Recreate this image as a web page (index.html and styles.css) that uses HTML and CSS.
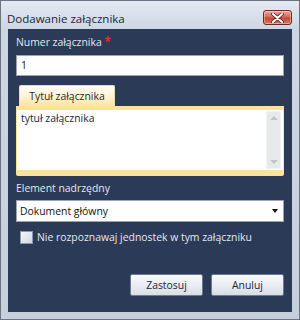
FILE: index.html
```html
<!DOCTYPE html>
<html lang="pl">
<head>
<meta charset="utf-8">
<link rel="stylesheet" href="styles.css">
</head>
<body>
<div class="window">
  <div class="titlebar">
    <span class="title">Dodawanie załącznika</span>
    <button class="close" aria-label="Zamknij">
      <svg width="13" height="10" viewBox="0 0 13 10"><path d="M2 1 L11 9 M11 1 L2 9" stroke="#5a2020" stroke-width="3.6" stroke-linecap="round"/><path d="M2 1 L11 9 M11 1 L2 9" stroke="#ffffff" stroke-width="2" stroke-linecap="round"/></svg>
    </button>
  </div>
  <div class="panel">
    <div class="label first">Numer załącznika <span class="req">*</span></div>
    <div class="input">1</div>
    <div class="group">
      <div class="tab">Tytuł załącznika</div>
      <div class="group-body">
        <div class="textarea">tytuł załącznika</div>
        <div class="scrollbar">
          <span class="arrow up"></span>
          <span class="arrow down"></span>
        </div>
      </div>
    </div>
    <div class="label second">Element nadrzędny</div>
    <div class="select">
      <span>Dokument główny</span>
      <span class="caret"></span>
    </div>
    <label class="check">
      <span class="box"></span>
      <span>Nie rozpoznawaj jednostek w tym załączniku</span>
    </label>
    <div class="buttons">
      <button class="btn">Zastosuj</button>
      <button class="btn">Anuluj</button>
    </div>
  </div>
</div>
</body>
</html>
```
FILE: styles.css
```css
* { box-sizing: border-box; }
html, body { margin: 0; padding: 0; }
body {
  width: 300px;
  height: 320px;
  font-family: "Open Sans", "Noto Sans", sans-serif;
  font-size: 10.4px;
}
.window {
  width: 300px;
  height: 320px;
  border: 1px solid #6a7484;
  background: linear-gradient(to bottom, #e4eaf2 0px, #cdd6e3 28px, #c6cfdc 100%);
  display: flex;
  flex-direction: column;
}
.titlebar {
  height: 28px;
  display: flex;
  align-items: flex-start;
  justify-content: space-between;
  padding: 0 7px 0 6px;
}
.title {
  color: #1b2636;
  font-size: 11.5px;
  line-height: 16px;
  margin-top: 10px;
}
.close {
  margin-top: 9px;
  width: 29px;
  height: 15px;
  padding: 0;
  border: 1px solid #6b2a24;
  border-radius: 3px;
  background: linear-gradient(to bottom, #e9a89a 0%, #d26b5a 45%, #c24a38 55%, #d5765f 100%);
  box-shadow: inset 0 0 0 1px rgba(255,255,255,0.35);
  display: flex;
  align-items: center;
  justify-content: center;
}
.panel {
  flex: 1;
  margin: 0 7px 7px 7px;
  background: #2b3a56;
  padding: 5px 8px 0 8px;
  display: flex;
  flex-direction: column;
}
.label {
  color: #e3e8f0;
  line-height: 16px;
}
.req { color: #e0302a; font-weight: bold; font-size: 11.5px; }
.input {
  margin-top: 5px;
  height: 21px;
  background: #fff;
  border: 1px solid #9aa4b4;
  padding: 0 4px;
  line-height: 19px;
  color: #111;
}
.group { margin-top: 9px; }
.tab {
  margin-left: 3px;
  width: 96px;
  height: 21px;
  border: 1px solid #e8dcb4;
  border-bottom: none;
  border-radius: 2px 2px 0 0;
  background: linear-gradient(to bottom, #fffdf6 0%, #fff3d2 50%, #fde4a0 100%);
  color: #1e2a3c;
  text-align: center;
  line-height: 20px;
}
.group-body {
  height: 70px;
  background: #fff;
  border-style: solid;
  border-color: #fce39a;
  border-width: 4px 1px 6px 1px;
  border-radius: 0 0 2px 2px;
  display: flex;
  padding: 1px 2px 1px 4px;
}
.textarea {
  flex: 1;
  color: #1b2636;
  line-height: 14px;
}
.scrollbar {
  width: 15px;
  background: #e8e9eb;
  border: 1px solid #f2f3f5;
  position: relative;
}
.arrow {
  position: absolute;
  left: 3px;
  width: 0;
  height: 0;
  border-left: 4px solid transparent;
  border-right: 4px solid transparent;
}
.arrow.up { top: 4px; border-bottom: 4px solid #c4c6ca; }
.arrow.down { bottom: 4px; border-top: 4px solid #c4c6ca; }
.second { margin-top: 4px; }
.select {
  margin-top: 4px;
  height: 22px;
  background: #fff;
  border: 1px solid #9aa4b4;
  display: flex;
  align-items: center;
  justify-content: space-between;
  padding: 0 4px 0 3px;
  color: #111;
}
.caret {
  width: 0; height: 0;
  border-left: 3.5px solid transparent;
  border-right: 3.5px solid transparent;
  border-top: 4px solid #111;
  margin-right: 1px;
}
.check {
  margin-top: 8px;
  margin-left: 4px;
  display: flex;
  align-items: center;
  gap: 4px;
  color: #e3e8f0;
  line-height: 15px;
}
.box {
  width: 13px;
  height: 13px;
  border: 1px solid #8c97a8;
  background: linear-gradient(135deg, #f4f6f9 0%, #dfe4ec 60%, #cfd6e1 100%);
}
.buttons {
  margin-top: auto;
  margin-bottom: 16px;
  display: flex;
  justify-content: flex-end;
  gap: 8px;
}
.btn {
  width: 73px;
  height: 22px;
  border: 1px solid #6f7a8c;
  border-radius: 2px;
  background: linear-gradient(to bottom, #f8f9fb 0%, #eaedf2 50%, #d8dde6 100%);
  font-family: inherit;
  font-size: 10.4px;
  color: #1b2636;
  padding: 0;
}
```
